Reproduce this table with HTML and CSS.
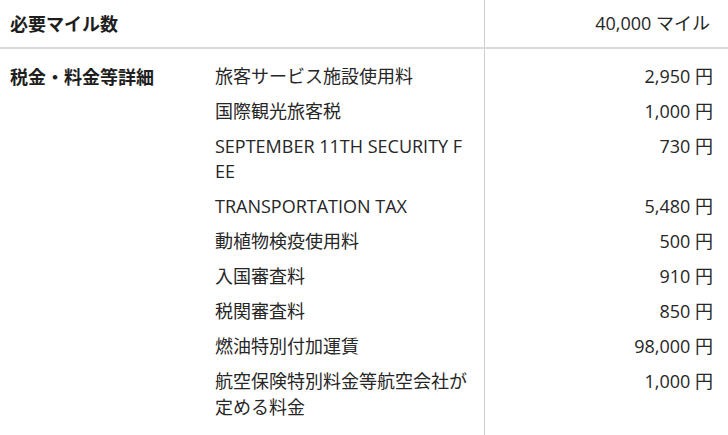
FILE: index.html
```html
<!DOCTYPE html>
<html lang="ja">
<head>
<meta charset="utf-8">
<link rel="stylesheet" href="styles.css">
</head>
<body>
<div class="fare">
  <div class="row-top">
    <div class="head">必要マイル数</div>
    <div class="val">40,000 マイル</div>
  </div>
  <div class="detail">
    <div class="head label">税金・料金等詳細</div>
    <ul class="items">
      <li class="item"><span class="name">旅客サービス施設使用料</span><span class="amt">2,950 円</span></li>
      <li class="item"><span class="name">国際観光旅客税</span><span class="amt">1,000 円</span></li>
      <li class="item"><span class="name">SEPTEMBER 11TH SECURITY FEE</span><span class="amt">730 円</span></li>
      <li class="item"><span class="name">TRANSPORTATION TAX</span><span class="amt">5,480 円</span></li>
      <li class="item"><span class="name">動植物検疫使用料</span><span class="amt">500 円</span></li>
      <li class="item"><span class="name">入国審査料</span><span class="amt">910 円</span></li>
      <li class="item"><span class="name">税関審査料</span><span class="amt">850 円</span></li>
      <li class="item"><span class="name">燃油特別付加運賃</span><span class="amt">98,000 円</span></li>
      <li class="item"><span class="name">航空保険特別料金等航空会社が定める料金</span><span class="amt">1,000 円</span></li>
    </ul>
  </div>
</div>
</body>
</html>
```

FILE: styles.css
```css
html, body {
  margin: 0;
  padding: 0;
  background: #fff;
}
body {
  font-family: "Open Sans", "Noto Sans CJK JP", sans-serif;
  font-size: 18px;
  line-height: 25.5px;
  color: #262626;
}
.fare {
  min-height: 100vh;
  background: linear-gradient(#cfcfcf, #cfcfcf) no-repeat 484px 0 / 1px 100%;
}
.row-top {
  display: grid;
  grid-template-columns: 485px 1fr;
  border-bottom: 2px solid #dadada;
  height: 47px;
  align-items: center;
}
.head {
  font-family: "Noto Sans CJK JP", sans-serif;
  font-weight: 700;
  color: #1e1e1e;
  padding-left: 10px;
}
.val {
  text-align: right;
  padding-right: 18px;
}
.detail {
  display: flex;
  padding: 9.5px 0 10px;
}
.label {
  width: 205px;
  flex: none;
  padding-top: 5px;
}
.items {
  list-style: none;
  margin: 0;
  padding: 0;
  flex: 1;
}
.item {
  display: grid;
  grid-template-columns: 269px 1fr;
  padding: 5px 0 4.5px;
}
.name {
  padding-right: 15px;
  word-break: break-all;
}
.amt {
  text-align: right;
  padding-right: 15px;
}
```
